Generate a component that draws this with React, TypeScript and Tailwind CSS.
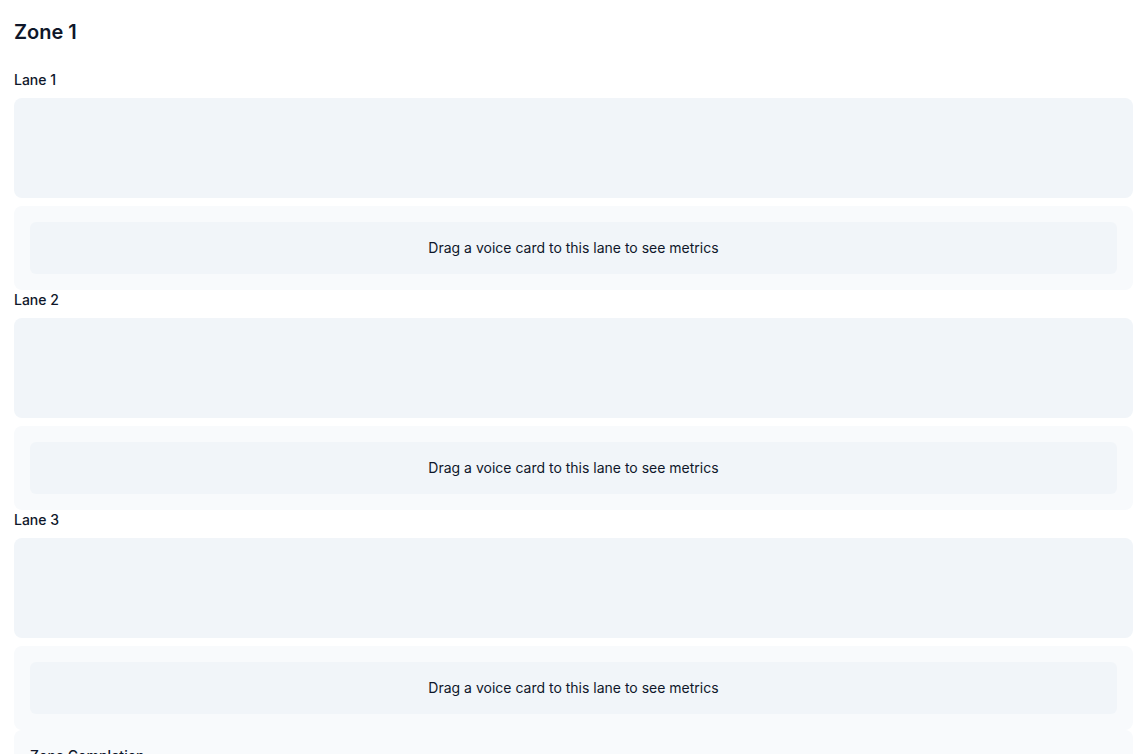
const lanes = ["Lane 1", "Lane 2", "Lane 3"];

function Lane({ name }: { name: string }) {
  return (
    <div>
      <div className="text-sm leading-5 font-medium text-[#0f172a] mb-2">{name}</div>
      {/* drop target */}
      <div className="h-[100px] rounded-lg bg-[#f1f5f9]" />
      {/* metrics panel */}
      <div className="mt-2 rounded-lg bg-[#f8fafc] p-4">
        <div className="rounded-md bg-[#f1f5f9] py-4 text-center text-sm leading-5 text-[#0f172a]">
          Drag a voice card to this lane to see metrics
        </div>
      </div>
    </div>
  );
}

export default function App() {
  return (
    <div className="min-h-screen bg-white px-3.5 pt-[18px] font-['Inter',sans-serif]">
      <h2 className="text-xl leading-7 font-semibold text-[#0f172a] mb-6">Zone 1</h2>
      {lanes.map((l) => (
        <Lane key={l} name={l} />
      ))}
      <div className="rounded-lg bg-[#f8fafc] p-4">
        <div className="text-sm leading-5 font-medium text-[#0f172a]">Zone Completion</div>
        <div className="mt-2 h-2 rounded-full bg-[#e2e8f0]" />
      </div>
    </div>
  );
}
